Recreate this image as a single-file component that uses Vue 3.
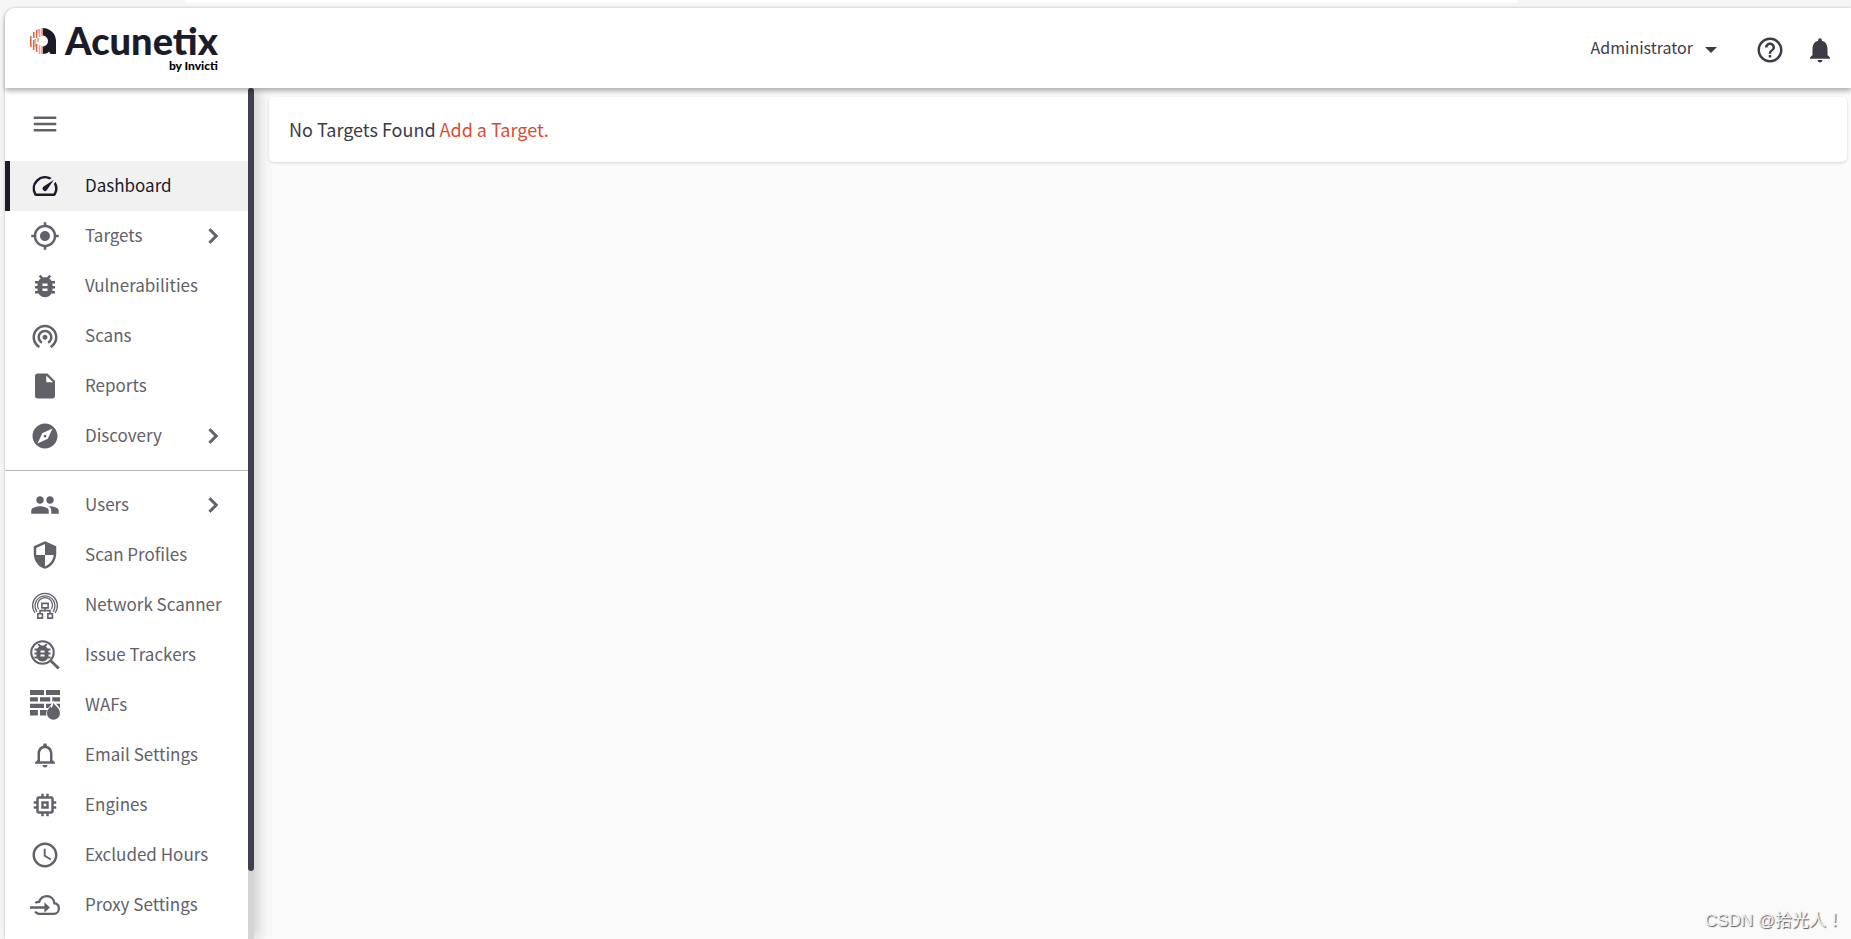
<script setup>
import { ref } from 'vue'

const icons = {
  menu: '<path d="M3 18h18v-2H3v2zm0-5h18v-2H3v2zm0-7v2h18V6H3z"/>',
  chevron: '<path stroke="currentColor" stroke-width=".5" d="M10 6L8.59 7.41 13.17 12l-4.58 4.59L10 18l6-6z"/>',
  speed:
    '<path d="M20.38 8.57l-1.23 1.85a8 8 0 0 1-.22 7.58H5.07A8 8 0 0 1 15.58 6.85l1.85-1.23A10 10 0 0 0 3.35 19a2 2 0 0 0 1.72 1h13.85a2 2 0 0 0 1.74-1 10 10 0 0 0-.27-10.44zm-9.79 6.84a2 2 0 0 0 2.83 0l5.66-8.49-8.49 5.66a2 2 0 0 0 0 2.83z"/>',
  target:
    '<path d="M12 8c-2.21 0-4 1.79-4 4s1.79 4 4 4 4-1.79 4-4-1.79-4-4-4zm8.94 3c-.46-4.17-3.77-7.48-7.94-7.94V1h-2v2.06C6.83 3.52 3.52 6.83 3.06 11H1v2h2.06c.46 4.17 3.77 7.48 7.94 7.94V23h2v-2.06c4.17-.46 7.48-3.77 7.94-7.94H23v-2h-2.06zM12 19c-3.87 0-7-3.13-7-7s3.13-7 7-7 7 3.13 7 7-3.13 7-7 7z"/>',
  bug:
    '<path d="M20 8h-2.81c-.45-.78-1.07-1.45-1.82-1.96L17 4.41 15.59 3l-2.17 2.17C12.96 5.06 12.49 5 12 5s-.96.06-1.41.17L8.41 3 7 4.41l1.62 1.63C7.88 6.55 7.26 7.22 6.81 8H4v2h2.09c-.05.33-.09.66-.09 1v1H4v2h2v1c0 .34.04.67.09 1H4v2h2.81c1.04 1.79 2.97 3 5.19 3s4.15-1.21 5.19-3H20v-2h-2.09c.05-.33.09-.66.09-1v-1h2v-2h-2v-1c0-.34-.04-.67-.09-1H20V8zm-6 8h-4v-2h4v2zm0-4h-4v-2h4v2z"/>',
  scan:
    '<path d="M12 11c-1.1 0-2 .9-2 2s.9 2 2 2 2-.9 2-2-.9-2-2-2zm6 2c0-3.31-2.69-6-6-6s-6 2.69-6 6c0 2.22 1.21 4.15 3 5.19l1-1.74c-1.19-.7-2-1.97-2-3.45 0-2.21 1.79-4 4-4s4 1.79 4 4c0 1.48-.81 2.75-2 3.45l1 1.74c1.79-1.04 3-2.97 3-5.19zM12 3C6.48 3 2 7.48 2 13c0 3.7 2.01 6.92 4.99 8.65l1-1.73C5.61 18.53 4 15.96 4 13c0-4.42 3.58-8 8-8s8 3.58 8 8c0 2.96-1.61 5.53-4 6.92l1 1.73c2.99-1.73 5-4.95 5-8.65 0-5.52-4.48-10-10-10z"/>',
  file:
    '<path d="M6 2c-1.1 0-1.99.9-1.99 2L4 20c0 1.1.89 2 1.99 2H18c1.1 0 2-.9 2-2V8l-6-6H6zm7 7V3.5L18.5 9H13z"/>',
  explore:
    '<path d="M12 10.9c-.61 0-1.1.49-1.1 1.1s.49 1.1 1.1 1.1c.61 0 1.1-.49 1.1-1.1s-.49-1.1-1.1-1.1zM12 2C6.48 2 2 6.48 2 12s4.48 10 10 10 10-4.48 10-10S17.52 2 12 2zm2.19 12.19L6 18l3.81-8.19L18 6l-3.81 8.19z"/>',
  users:
    '<path d="M16 11c1.66 0 2.99-1.34 2.99-3S17.66 5 16 5c-1.66 0-3 1.34-3 3s1.34 3 3 3zm-8 0c1.66 0 2.99-1.34 2.99-3S9.66 5 8 5C6.34 5 5 6.34 5 8s1.34 3 3 3zm0 2c-2.33 0-7 1.17-7 3.5V19h14v-2.5c0-2.33-4.67-3.5-7-3.5zm8 0c-.29 0-.62.02-.97.05 1.16.84 1.97 1.97 1.97 3.45V19h6v-2.5c0-2.33-4.67-3.5-7-3.5z"/>',
  shield:
    '<path d="M12 1L3 5v6c0 5.55 3.84 10.74 9 12 5.16-1.26 9-6.45 9-12V5l-9-4zm0 10.99h7c-.53 4.12-3.28 7.79-7 8.94V12H5V6.3l7-3.11v8.8z"/>',
  network:
    '<g fill="none" stroke="currentColor"><path stroke-width="1" d="M4 18.4a9.900 9.900 0 1 1 16 0M5.600 17.400a8 8 0 1 1 12.800 0M7 15.400a6 6 0 1 1 10 0"/><path stroke-width="1.300" d="M9.500 10.700h5v3.600h-5zM12 14.300v2.200M8 18.800v-2.300h8v2.300M6.300 19h3.600v3.500H6.300zM14.300 19h3.600v3.500h-3.600z"/></g>',
  tracker:
    '<circle cx="10" cy="10" r="9" fill="none" stroke="currentColor" stroke-width="1.600"/><path d="M16 17.500l1.500-1.500 6.300 6-1.600 1.600z"/><g transform="translate(.4 .3) scale(.8)"><path d="M20 8h-2.810c-.45-.78-1.070-1.450-1.820-1.960L17 4.410 15.590 3l-2.170 2.170C12.960 5.060 12.490 5 12 5s-.96.06-1.410.17L8.410 3 7 4.410l1.620 1.630C7.880 6.550 7.260 7.220 6.810 8H4v2h2.090c-.05.33-.09.66-.09 1v1H4v2h2v1c0 .34.04.67.09 1H4v2h2.810c1.040 1.790 2.970 3 5.190 3s4.150-1.210 5.190-3H20v-2h-2.090c.05-.33.09-.66.09-1v-1h2v-2h-2v-1c0-.34-.04-.67-.09-1H20V8zm-6 8h-4v-2h4v2zm0-4h-4v-2h4v2z"/></g>',
  wall:
    '<path d="M0 0h11.200v4H0zM12.800 0H24v4H12.800zM0 5.800h6.300v3.400H0zM8 5.800h8.200v3.400H8zM17.800 5.800H24v3.400h-6.200zM0 11h11.200v3.400H0zM12.800 11H24v3.400H12.800zM0 16h6.300v4.400H0zM8 16h6v4.400H8z"/><path fill="#fff" d="M18.600 8.200c.8 2.300 5.900 4.600 5.900 9.300H25v7H13v-6c0-4.600 5.400-6.300 5.600-10.300z"/><path d="M18.800 10c.6 2.500 5.200 4.300 5.200 8.600a5.200 5.200 0 0 1-10.400 0c0-3 2-3.900 2.600-5.600l1 1.300c.8-1.200 1.500-2.500 1.600-4.300z"/>',
  bellOutline:
    '<path d="M12 22c1.100 0 2-.9 2-2h-4c0 1.100.9 2 2 2zm6-6v-5c0-3.070-1.630-5.640-4.500-6.320V4c0-.83-.67-1.500-1.500-1.500s-1.500.67-1.500 1.500v.68C7.640 5.360 6 7.920 6 11v5l-2 2v1h16v-1l-2-2zm-2 1H8v-6c0-2.480 1.510-4.500 4-4.500s4 2.020 4 4.500v6z"/>',
  chip:
    '<path d="M15 9H9v6h6V9zm-2 4h-2v-2h2v2zm8-2V9h-2V7c0-1.100-.9-2-2-2h-2V3h-2v2h-2V3H9v2H7c-1.100 0-2 .9-2 2v2H3v2h2v2H3v2h2v2c0 1.100.9 2 2 2h2v2h2v-2h2v2h2v-2h2c1.100 0 2-.9 2-2v-2h2v-2h-2v-2h2zm-4 6H7V7h10v10z"/>',
  clock:
    '<path d="M11.990 2C6.470 2 2 6.480 2 12s4.470 10 9.990 10C17.520 22 22 17.520 22 12S17.520 2 11.990 2zM12 20c-4.420 0-8-3.580-8-8s3.580-8 8-8 8 3.580 8 8-3.580 8-8 8zm.5-13H11v6l5.250 3.150.75-1.230-4.500-2.670z"/>',
  proxy:
    '<path fill="none" stroke="currentColor" stroke-width="1.800" d="M4.300 10.300c1.200-.9 2-.9 3-.9C8.400 6.600 10.800 4.900 13.500 4.900c3.200 0 5.700 2.300 6 5.800 2.200.2 3.600 1.700 3.600 4 0 2.600-1.700 4.400-4.200 4.400H7.600c-1.600 0-2.800-.7-3.500-1.900"/><path d="M0 13h11.500V9.800l4.400 4.200-4.400 4.200V15H0z"/>',
  help:
    '<path d="M11 18h2v-2h-2v2zm1-16C6.480 2 2 6.480 2 12s4.480 10 10 10 10-4.480 10-10S17.520 2 12 2zm0 18c-4.410 0-8-3.590-8-8s3.590-8 8-8 8 3.590 8 8-3.590 8-8 8zm0-14c-2.210 0-4 1.790-4 4h2c0-1.100.9-2 2-2s2 .9 2 2c0 2-3 1.750-3 5h2c0-2.250 3-2.500 3-5 0-2.210-1.790-4-4-4z"/>',
  bell:
    '<path d="M12 22c1.100 0 2-.9 2-2h-4c0 1.100.89 2 2 2zm6-6v-5c0-3.070-1.640-5.640-4.500-6.320V4c0-.83-.67-1.500-1.500-1.500s-1.500.67-1.500 1.500v.68C7.630 5.360 6 7.920 6 11v5l-2 2v1h16v-1l-2-2z"/>',
}

const groups = [
  [
    { label: 'Dashboard', icon: 'speed' },
    { label: 'Targets', icon: 'target', more: true },
    { label: 'Vulnerabilities', icon: 'bug' },
    { label: 'Scans', icon: 'scan' },
    { label: 'Reports', icon: 'file' },
    { label: 'Discovery', icon: 'explore', more: true },
  ],
  [
    { label: 'Users', icon: 'users', more: true },
    { label: 'Scan Profiles', icon: 'shield' },
    { label: 'Network Scanner', icon: 'network' },
    { label: 'Issue Trackers', icon: 'tracker' },
    { label: 'WAFs', icon: 'wall' },
    { label: 'Email Settings', icon: 'bellOutline' },
    { label: 'Engines', icon: 'chip' },
    { label: 'Excluded Hours', icon: 'clock' },
    { label: 'Proxy Settings', icon: 'proxy' },
  ],
]

const active = ref('Dashboard')
</script>

<template>
  <div class="shell">
    <div class="strip"><div class="strip-bar"></div></div>

    <div class="app">
      <header class="topbar">
        <a href="#" class="brand">
          <svg class="mark" viewBox="0 0 26 26" aria-hidden="true">
            <path
              fill="#1c1b29"
              d="M12.500 0C20 0 26 5.500 26 13v13h-5.500l-1.500-2.500C17.500 25.300 15.500 26 12.500 26v-7.500c3 0 5.500-2.500 5.500-5.500s-2.500-5.500-5.500-5.500z"
            />
            <g fill="none" stroke="#d9684a" stroke-width="1.600">
              <path d="M.8 8v11M3.700 4v6M3.700 12v10M6.600 2v8M6.600 16v8" />
              <path stroke="#eda28e" d="M5.200 11v8M8.200 1v4M9.600 1v8M9.600 17v9M12 0v8M12 18v8M8 10v4" />
            </g>
          </svg>
          <span class="names">
            <span class="name">Acunetix</span>
            <span class="by">by Invicti</span>
          </span>
        </a>
        <div class="actions">
          <button type="button" class="account">
            <span class="user">Administrator</span>
            <svg class="caret" viewBox="0 0 12 6" aria-hidden="true"><path d="M0 0h12L6 6z" /></svg>
          </button>
          <button type="button" aria-label="Help">
            <svg class="icon" viewBox="0 0 24 24" v-html="icons.help"></svg>
          </button>
          <button type="button" aria-label="Notifications">
            <svg class="icon" viewBox="0 0 24 24" v-html="icons.bell"></svg>
          </button>
        </div>
      </header>

      <div class="body">
        <aside class="sidebar">
          <nav class="nav">
            <button type="button" class="toggle" aria-label="Toggle menu">
              <svg class="icon" viewBox="0 0 24 24" v-html="icons.menu"></svg>
            </button>
            <ul v-for="(group, i) in groups" :key="i" class="group">
              <li v-for="item in group" :key="item.label">
                <a
                  href="#"
                  class="item"
                  :class="{ active: item.label === active }"
                  @click.prevent="active = item.label"
                >
                  <svg class="icon" viewBox="0 0 24 24" v-html="icons[item.icon]"></svg>
                  <span class="label">{{ item.label }}</span>
                  <svg v-if="item.more" class="icon" viewBox="0 0 24 24" v-html="icons.chevron"></svg>
                </a>
              </li>
            </ul>
          </nav>
          <div class="scroll"><div class="thumb"></div></div>
        </aside>

        <main class="content">
          <section class="card">
            No Targets Found <a href="#">Add a Target.</a>
          </section>
        </main>
      </div>
    </div>

    <div class="watermark">CSDN @拾光人！</div>
  </div>
</template>

<style>
body {
  margin: 0;
  background: #f6f6f6;
}
</style>

<style scoped>
.shell {
  position: relative;
  display: flex;
  flex-direction: column;
  height: 100vh;
  overflow: hidden;
  font-family: 'Noto Sans CJK SC', 'Noto Sans', sans-serif;
  color: #3c3b47;
}

.strip {
  flex: none;
  height: 8px;
}

.strip-bar {
  width: 72%;
  height: 3px;
  margin-left: 10%;
  border-radius: 0 0 12px 12px;
  background: #fff;
}

.app {
  display: flex;
  flex: 1;
  flex-direction: column;
  min-height: 0;
  margin-left: 5px;
  border-radius: 10px 0 0 0;
  background: #fafafa;
  box-shadow: 0 0 3px rgb(0 0 0 / 0.2);
}

button {
  display: flex;
  align-items: center;
  padding: 0;
  border: none;
  background: none;
  color: inherit;
  font: inherit;
  cursor: pointer;
}

a {
  text-decoration: none;
}

.icon {
  flex: none;
  width: 30px;
  height: 30px;
  fill: currentColor;
  overflow: visible;
}

.topbar {
  position: relative;
  z-index: 2;
  display: flex;
  flex: none;
  justify-content: space-between;
  box-sizing: border-box;
  height: 80px;
  padding: 0 16px 0 25px;
  border-radius: 10px 0 0 0;
  background: #fff;
  box-shadow: 0 3px 5px rgb(0 0 0 / 0.3);
}

.brand {
  display: flex;
  gap: 9px;
  color: #1c1b29;
  font-family: Lato, sans-serif;
}

.mark {
  width: 26px;
  height: 26px;
  margin-top: 20px;
}

.names {
  display: flex;
  flex-direction: column;
  align-items: flex-end;
  padding-top: 12px;
}

.name {
  font-size: 38px;
  font-weight: 900;
  line-height: 40px;
}

.by {
  font-size: 12px;
  font-weight: 900;
  line-height: 12px;
  color: #000;
}

.actions {
  display: flex;
  align-items: center;
  gap: 20px;
  padding-top: 4px;
}

.account {
  gap: 12px;
  margin-right: 18px;
}

.user {
  padding-bottom: 6px;
  font-size: 16px;
}

.caret {
  width: 12px;
  height: 6px;
  fill: #3c3b47;
}

.body {
  display: flex;
  flex: 1;
  min-height: 0;
}

.sidebar {
  position: relative;
  z-index: 1;
  display: flex;
  flex: none;
  box-shadow: 6px 0 12px rgb(0 0 0 / 0.15);
}

.nav {
  box-sizing: border-box;
  width: 243px;
  overflow: hidden;
  background: #fff;
  color: #62616a;
}

.toggle {
  height: 73px;
  padding: 0 0 1px 25px;
}

.group {
  margin: 0;
  padding: 0;
  list-style: none;
}

.group + .group {
  margin-top: 9px;
  padding-top: 9px;
  border-top: 1px solid #b5b5b8;
}

.item {
  display: flex;
  align-items: center;
  gap: 25px;
  height: 50px;
  padding: 0 20px 0 25px;
  color: #62616a;
  font-size: 17px;
  white-space: nowrap;
}

.item.active {
  padding-left: 20px;
  border-left: 5px solid #1c1b29;
  background: #f1f1f1;
  color: #1c1b29;
}

.label {
  flex: 1;
  padding-bottom: 3px;
}

.scroll {
  display: flex;
  flex-direction: column;
  width: 6px;
  background: #d5d5d5;
}

.thumb {
  height: 92%;
  border-radius: 3px;
  background: #403f4c;
}

.content {
  flex: 1;
  padding: 9px 4px 0 15px;
}

.card {
  padding: 16px 20px;
  border-radius: 5px;
  background: #fff;
  box-shadow: 0 1px 3px rgb(0 0 0 / 0.15);
  font-size: 18px;
  line-height: 33px;
}

.card a {
  color: #d64e37;
}

.watermark {
  position: absolute;
  right: 8px;
  bottom: 6px;
  color: #f2f2f2;
  font-family: 'Liberation Sans', 'Noto Sans CJK TC', sans-serif;
  font-size: 17px;
  line-height: 24px;
  text-shadow: 1px 1px 1px #555;
}
</style>
